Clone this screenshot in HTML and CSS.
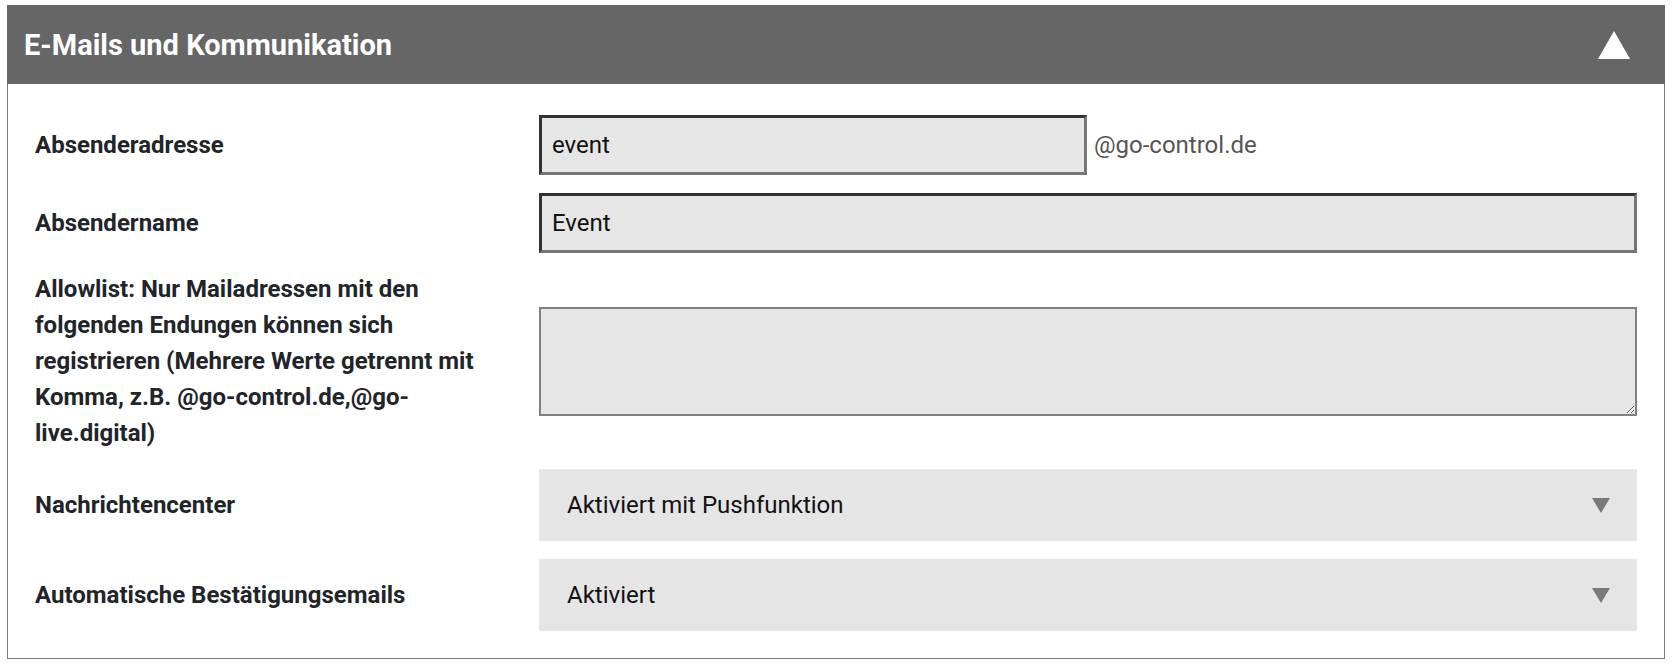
FILE: index.html
```html
<!DOCTYPE html>
<html lang="de">
<head>
  <meta charset="UTF-8">
  <meta name="viewport" content="width=device-width, initial-scale=1.0">
  <title>E-Mails und Kommunikation</title>
  <link rel="stylesheet" href="styles.css">
</head>
<body>

  <div class="panel">
    <div class="panel-head">
      <h2>E-Mails und Kommunikation</h2>
      <svg class="toggle" width="32" height="28" viewBox="0 0 32 28"><polygon points="16,0 32,28 0,28" fill="#fff"/></svg>
    </div>

    <div class="panel-body">
      <div class="row">
        <label for="senderAddress">Absenderadresse</label>
        <div class="field-with-suffix">
          <input type="text" id="senderAddress" class="text-input half" value="event">
          <span class="suffix">@go-control.de</span>
        </div>
      </div>

      <div class="row">
        <label for="senderName">Absendername</label>
        <input type="text" id="senderName" class="text-input" value="Event">
      </div>

      <div class="row">
        <label for="allowlist">Allowlist: Nur Mailadressen mit den folgenden Endungen können sich registrieren (Mehrere Werte getrennt mit Komma, z.B. @go-control.de,@go-live.digital)</label>
        <textarea id="allowlist" class="text-area"></textarea>
      </div>

      <div class="row">
        <label for="messageCenter">Nachrichtencenter</label>
        <div class="select-wrap">
          <select id="messageCenter">
            <option>Aktiviert mit Pushfunktion</option>
            <option>Aktiviert</option>
            <option>Deaktiviert</option>
          </select>
          <svg class="caret" width="18" height="15" viewBox="0 0 18 15"><polygon points="0,0 18,0 9,15" fill="#7a7a7a"/></svg>
        </div>
      </div>

      <div class="row">
        <label for="autoMails">Automatische Bestätigungsemails</label>
        <div class="select-wrap">
          <select id="autoMails">
            <option>Aktiviert</option>
            <option>Deaktiviert</option>
          </select>
          <svg class="caret" width="18" height="15" viewBox="0 0 18 15"><polygon points="0,0 18,0 9,15" fill="#7a7a7a"/></svg>
        </div>
      </div>
    </div>
  </div>

</body>
</html>
```

FILE: styles.css
```css
body {
  margin: 5px 15px 0 7px;
  font-family: Roboto, "Liberation Sans", Arial, sans-serif;
  background-color: #fff;
  color: #212529;
}

.panel-head {
  display: flex;
  justify-content: space-between;
  align-items: center;
  height: 79px;
  padding: 0 35px 0 17px;
  background-color: #666;
  color: #fff;
}

.panel-head h2 {
  margin: 0;
  font-size: 29px;
  font-weight: bold;
}

.panel-body {
  padding: 31px 27px 27px 27px;
  border: 1px solid #7a7a7a;
  border-top: none;
}

.row {
  display: grid;
  grid-template-columns: 504px 1fr;
  align-items: center;
  margin-bottom: 18px;
}

.row:last-child {
  margin-bottom: 0;
}

.row label {
  padding-right: 24px;
  font-size: 24px;
  font-weight: bold;
  line-height: 36px;
}

.text-input {
  box-sizing: border-box;
  width: 100%;
  height: 60px;
  padding: 0 10px;
  background-color: #e6e6e6;
  border-style: solid;
  border-width: 3px;
  border-color: #333 #767676 #767676 #333;
  font-family: inherit;
  font-size: 24px;
  color: #111;
  outline: none;
}

.field-with-suffix {
  display: flex;
  align-items: center;
}

.text-input.half {
  width: 548px;
}

.suffix {
  margin-left: 7px;
  font-size: 24px;
  color: #555;
}

.text-area {
  box-sizing: border-box;
  display: block;
  width: 100%;
  height: 109px;
  background-color: #e6e6e6;
  border: 2px solid #808080;
  font-family: inherit;
  font-size: 24px;
  outline: none;
}

.select-wrap {
  position: relative;
}

.select-wrap select {
  display: block;
  width: 100%;
  height: 72px;
  padding: 0 60px 0 28px;
  background-color: #e5e5e5;
  border: none;
  border-radius: 0;
  appearance: none;
  -webkit-appearance: none;
  font-family: inherit;
  font-size: 24px;
  color: #111;
  outline: none;
}

.caret {
  position: absolute;
  top: 29px;
  right: 27px;
  pointer-events: none;
}
```
